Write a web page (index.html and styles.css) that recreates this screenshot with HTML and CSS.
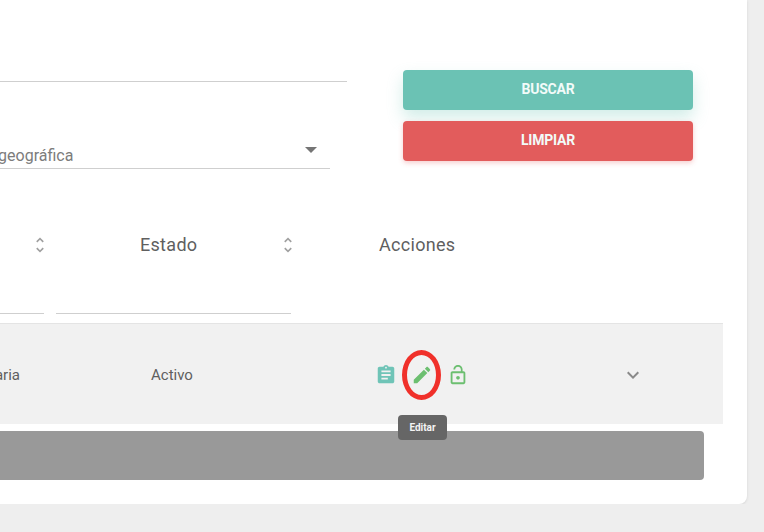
FILE: index.html
```html
<!DOCTYPE html>
<html lang="es">
<head>
  <meta charset="UTF-8">
  <title>Usuarios</title>
  <link rel="stylesheet" href="styles.css">
</head>
<body>
  <div class="card">
    <div class="filter-section">
      <div class="filter-fields">
        <div class="field field-text"></div>
        <div class="field field-select">
          <span class="select-value">Zona geográfica</span>
          <span class="select-arrow"></span>
        </div>
      </div>
      <div class="filter-actions">
        <button class="btn btn-search">BUSCAR</button>
        <button class="btn btn-clear">LIMPIAR</button>
      </div>
    </div>

    <div class="table-head">
      <div class="head-cell head-first">
        <svg class="sort-icon" viewBox="0 0 24 24"><path d="M12 5.83L15.17 9l1.41-1.41L12 3 7.41 7.59 8.83 9 12 5.83zm0 12.34L8.83 15l-1.41 1.41L12 21l4.59-4.59L15.17 15 12 18.17z"/></svg>
      </div>
      <div class="head-cell head-status">
        <span>Estado</span>
        <svg class="sort-icon" viewBox="0 0 24 24"><path d="M12 5.83L15.17 9l1.41-1.41L12 3 7.41 7.59 8.83 9 12 5.83zm0 12.34L8.83 15l-1.41 1.41L12 21l4.59-4.59L15.17 15 12 18.17z"/></svg>
      </div>
      <div class="head-cell head-actions">Acciones</div>
    </div>

    <div class="table-filters">
      <div class="col-filter col-filter-first"></div>
      <div class="col-filter col-filter-status"></div>
    </div>

    <div class="table-row">
      <div class="cell cell-first"><span>Secretaria</span></div>
      <div class="cell cell-status">Activo</div>
      <div class="cell cell-actions">
        <svg class="action-icon icon-teal" viewBox="0 0 24 24"><path d="M19 3h-4.18C14.4 1.84 13.3 1 12 1c-1.3 0-2.4.84-2.82 2H5c-1.1 0-2 .9-2 2v14c0 1.1.9 2 2 2h14c1.1 0 2-.9 2-2V5c0-1.1-.9-2-2-2zm-7 0c.55 0 1 .45 1 1s-.45 1-1 1-1-.45-1-1 .45-1 1-1zm2 14H7v-2h7v2zm3-4H7v-2h10v2zm0-4H7V7h10v2z"/></svg>
        <span class="edit-wrap">
          <svg class="action-icon icon-green" viewBox="0 0 24 24"><path d="M3 17.25V21h3.75L17.81 9.94l-3.75-3.75L3 17.25zM20.71 7.04c.39-.39.39-1.02 0-1.41l-2.34-2.34c-.39-.39-1.02-.39-1.41 0l-1.83 1.83 3.75 3.75 1.83-1.83z"/></svg>
          <span class="red-ring"></span>
          <span class="tooltip">Editar</span>
        </span>
        <svg class="action-icon icon-green" viewBox="0 0 24 24"><path d="M12 17c1.1 0 2-.9 2-2s-.9-2-2-2-2 .9-2 2 .9 2 2 2zm6-9h-1V6c0-2.76-2.24-5-5-5S7 3.24 7 6h1.9c0-1.71 1.39-3.1 3.1-3.1 1.71 0 3.1 1.39 3.1 3.1v2H6c-1.1 0-2 .9-2 2v10c0 1.1.9 2 2 2h12c1.1 0 2-.9 2-2V10c0-1.1-.9-2-2-2zm0 12H6V10h12v10z"/></svg>
      </div>
      <div class="cell cell-expand">
        <svg class="expand-icon" viewBox="0 0 24 24"><path d="M16.59 8.59L12 13.17 7.41 8.59 6 10l6 6 6-6z"/></svg>
      </div>
    </div>

    <div class="grey-bar"></div>
  </div>
</body>
</html>
```

FILE: styles.css
```css
* {
  margin: 0;
  padding: 0;
  box-sizing: border-box;
}

body {
  font-family: 'Roboto', sans-serif;
  background-color: #eeeeee;
  color: #5f5f5f;
  overflow: hidden;
}

.card {
  width: 747px;
  height: 504px;
  background-color: white;
  border-radius: 0 0 8px 0;
  box-shadow: 0 1px 3px rgba(0,0,0,0.1);
}

/* Filters */
.filter-section {
  display: flex;
  height: 205px;
}

.filter-fields {
  width: 347px;
}

.field {
  border-bottom: 1px solid #cfcfcf;
}

.field-text {
  height: 82px;
}

.field-select {
  display: flex;
  align-items: flex-end;
  justify-content: space-between;
  width: 330px;
  height: 87px;
  padding-bottom: 3px;
}

.select-value {
  margin-left: -42px;
  font-size: 16px;
  line-height: 18px;
  color: #7c7c7c;
  white-space: nowrap;
}

.select-arrow {
  width: 0;
  height: 0;
  margin: 0 13px 12px 0;
  border-left: 6px solid transparent;
  border-right: 6px solid transparent;
  border-top: 6px solid #757575;
}

.filter-actions {
  display: flex;
  flex-direction: column;
  gap: 11px;
  width: 290px;
  margin-left: 56px;
  padding-top: 70px;
}

.btn {
  height: 40px;
  padding-bottom: 2px;
  border: none;
  border-radius: 4px;
  color: #f2fbf9;
  font-family: inherit;
  font-size: 14px;
  font-weight: 700;
  letter-spacing: -0.2px;
}

.btn-search {
  background-color: #6bc2b4;
  box-shadow: 0 8px 16px rgba(107,194,180,0.3);
}

.btn-clear {
  background-color: #e25c5c;
  box-shadow: 0 2px 5px rgba(226,92,92,0.3);
}

/* Table */
.table-head {
  display: flex;
  align-items: center;
  height: 80px;
}

.head-cell {
  display: flex;
  align-items: center;
  font-size: 18px;
  line-height: 20px;
  letter-spacing: 0.3px;
}

.head-cell span {
  margin-top: -1px;
}

.head-first {
  justify-content: flex-end;
  width: 50px;
}

.head-status {
  justify-content: space-between;
  width: 248px;
  padding-left: 90px;
}

.head-actions {
  margin-top: -1px;
  margin-left: 81px;
}

.sort-icon {
  width: 20px;
  height: 20px;
  fill: #a0a0a0;
}

.table-filters {
  display: flex;
  gap: 12px;
  height: 38px;
  padding-top: 28px;
}

.col-filter {
  height: 1px;
  background-color: #cfcfcf;
}

.col-filter-first {
  width: 44px;
}

.col-filter-status {
  width: 235px;
}

.table-row {
  display: flex;
  align-items: center;
  width: 723px;
  height: 101px;
  padding-top: 2px;
  background-color: #f1f1f1;
  border-top: 1px solid #e4e4e4;
  font-size: 15px;
}

.cell-first {
  display: flex;
  justify-content: flex-end;
  width: 20px;
  white-space: nowrap;
}

.cell-status {
  width: 177px;
  padding-left: 131px;
}

.cell-actions {
  display: flex;
  align-items: center;
  gap: 14px;
  margin-left: 178px;
}

.action-icon {
  display: block;
  width: 22px;
  height: 22px;
}

.icon-teal {
  fill: #6fc4b7;
}

.icon-green {
  fill: #6cbf70;
}

.edit-wrap {
  position: relative;
  display: block;
}

.red-ring {
  position: absolute;
  left: -9px;
  top: -14px;
  width: 39px;
  height: 50px;
  border: 5px solid #f0302a;
  border-radius: 50%;
}

.tooltip {
  position: absolute;
  left: -13px;
  top: 51px;
  width: 49px;
  height: 25px;
  border-radius: 4px;
  background-color: #666666;
  color: #f4f4f4;
  font-size: 10px;
  font-weight: 700;
  line-height: 25px;
  text-align: center;
}

.cell-expand {
  margin-left: 152px;
}

.expand-icon {
  display: block;
  width: 24px;
  height: 24px;
  fill: #8a8a8a;
}

.grey-bar {
  width: 704px;
  height: 49px;
  margin-top: 7px;
  background-color: #999999;
  border-radius: 0 4px 4px 0;
}
```
